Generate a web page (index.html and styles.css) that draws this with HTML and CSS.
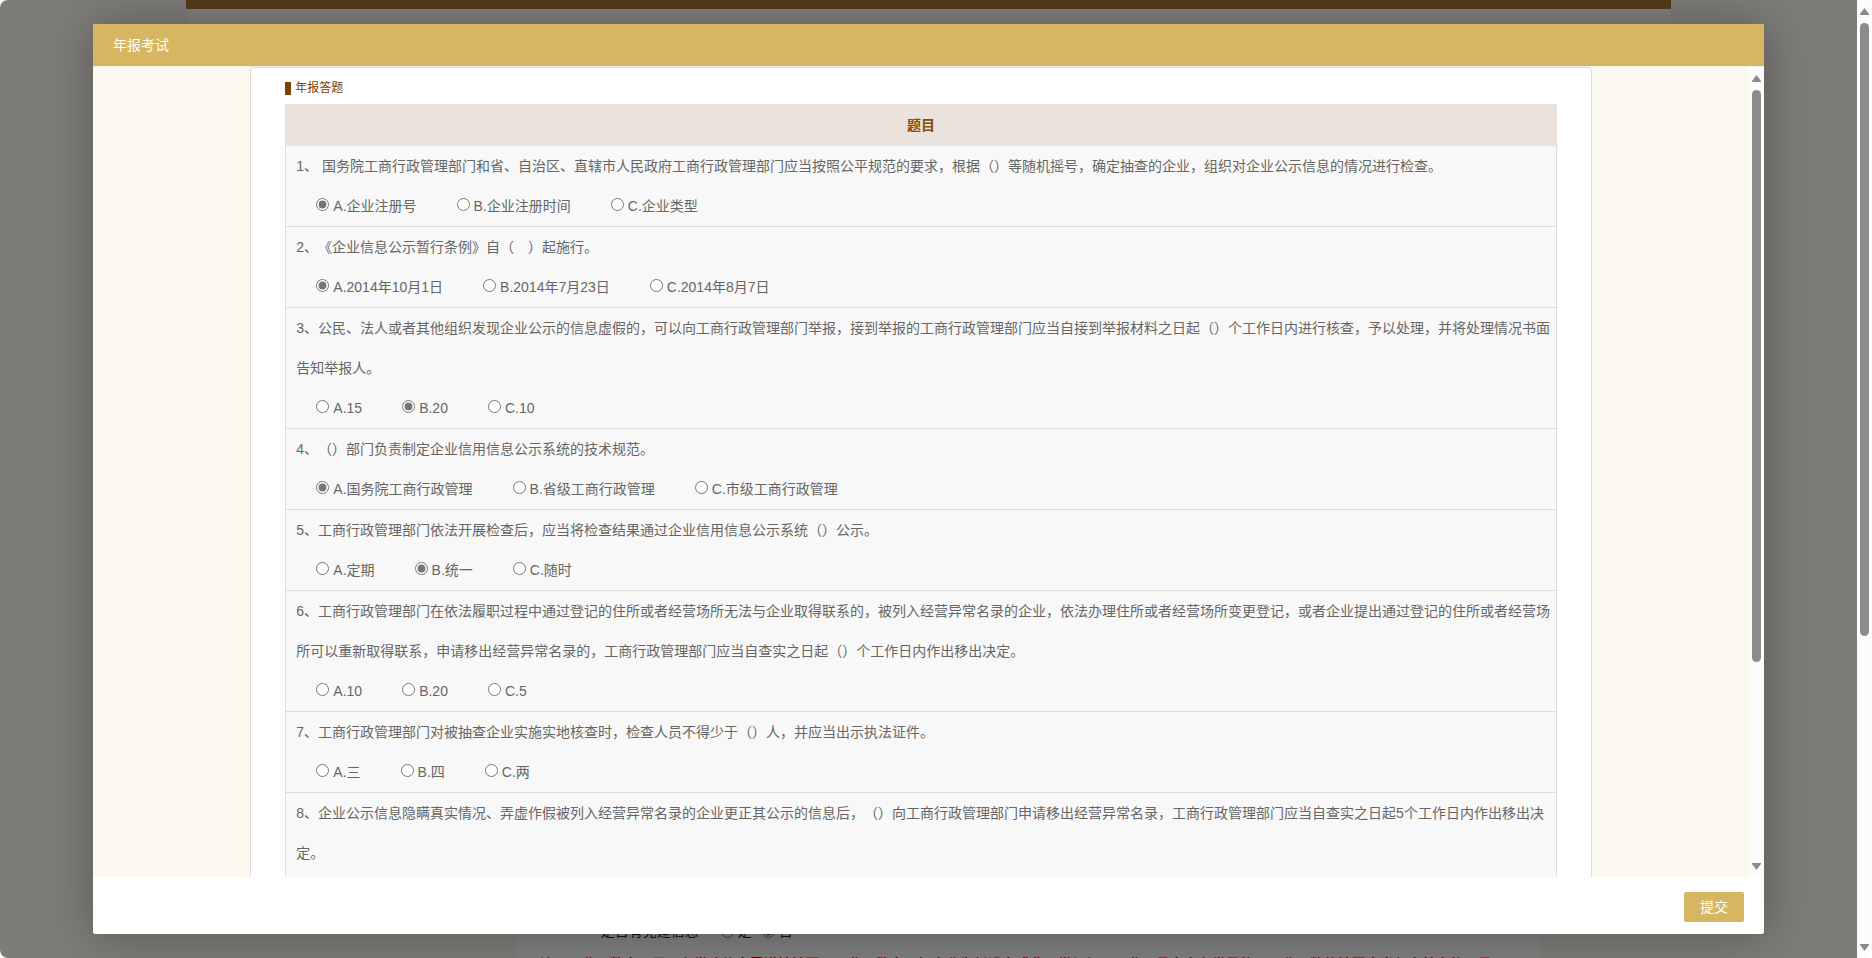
FILE: index.html
```html
<!DOCTYPE html>
<html lang="zh-CN">
<head>
<meta charset="utf-8">
<title>年报考试</title>
<link rel="stylesheet" href="styles.css">
</head>
<body>
<div class="window">
  <div class="page">
    <div class="page-banner"></div>
    <div class="page-head"></div>
    <div class="page-main">
      <div class="party">
        <span>是否有党建信息</span>
        <label><input type="radio" name="party"> 是</label>
        <label><input type="radio" name="party" checked> 否</label>
      </div>
      <p class="note">注：从业人数中，是否有党建信息需谨慎填写，从业人数中，如企业为新设立或非公党组织，从业人员中含有党员的，从业人数的填写应当包含其中的人员。</p>
    </div>
  </div>
  <div class="scrollbar outer"><i class="up"></i><i class="thumb"></i><i class="down"></i></div>
  <div class="shade"></div>
  <section class="dialog" role="dialog" aria-labelledby="dialog-title">
    <h1 class="dialog-title" id="dialog-title">年报考试</h1>
    <div class="dialog-body">
      <div class="scroll-area">
        <form class="card" id="exam">
          <h2 class="card-title">年报答题</h2>
          <table class="exam">
            <thead><tr><th>题目</th></tr></thead>
            <tbody>
              <tr><td>
                <p class="question">1、 国务院工商行政管理部门和省、自治区、直辖市人民政府工商行政管理部门应当按照公平规范的要求，根据（）等随机摇号，确定抽查的企业，组织对企业公示信息的情况进行检查。</p>
                <div class="answers">
                  <label><input type="radio" name="q1" checked>A.企业注册号</label>
                  <label><input type="radio" name="q1">B.企业注册时间</label>
                  <label><input type="radio" name="q1">C.企业类型</label>
                </div>
              </td></tr>
              <tr><td>
                <p class="question">2、《企业信息公示暂行条例》自（　）起施行。</p>
                <div class="answers">
                  <label><input type="radio" name="q2" checked>A.2014年10月1日</label>
                  <label><input type="radio" name="q2">B.2014年7月23日</label>
                  <label><input type="radio" name="q2">C.2014年8月7日</label>
                </div>
              </td></tr>
              <tr><td>
                <p class="question">3、公民、法人或者其他组织发现企业公示的信息虚假的，可以向工商行政管理部门举报，接到举报的工商行政管理部门应当自接到举报材料之日起（）个工作日内进行核查，予以处理，并将处理情况书面告知举报人。</p>
                <div class="answers">
                  <label><input type="radio" name="q3">A.15</label>
                  <label><input type="radio" name="q3" checked>B.20</label>
                  <label><input type="radio" name="q3">C.10</label>
                </div>
              </td></tr>
              <tr><td>
                <p class="question">4、（）部门负责制定企业信用信息公示系统的技术规范。</p>
                <div class="answers">
                  <label><input type="radio" name="q4" checked>A.国务院工商行政管理</label>
                  <label><input type="radio" name="q4">B.省级工商行政管理</label>
                  <label><input type="radio" name="q4">C.市级工商行政管理</label>
                </div>
              </td></tr>
              <tr><td>
                <p class="question">5、工商行政管理部门依法开展检查后，应当将检查结果通过企业信用信息公示系统（）公示。</p>
                <div class="answers">
                  <label><input type="radio" name="q5">A.定期</label>
                  <label><input type="radio" name="q5" checked>B.统一</label>
                  <label><input type="radio" name="q5">C.随时</label>
                </div>
              </td></tr>
              <tr><td>
                <p class="question">6、工商行政管理部门在依法履职过程中通过登记的住所或者经营场所无法与企业取得联系的，被列入经营异常名录的企业，依法办理住所或者经营场所变更登记，或者企业提出通过登记的住所或者经营场所可以重新取得联系，申请移出经营异常名录的，工商行政管理部门应当自查实之日起（）个工作日内作出移出决定。</p>
                <div class="answers">
                  <label><input type="radio" name="q6">A.10</label>
                  <label><input type="radio" name="q6">B.20</label>
                  <label><input type="radio" name="q6">C.5</label>
                </div>
              </td></tr>
              <tr><td>
                <p class="question">7、工商行政管理部门对被抽查企业实施实地核查时，检查人员不得少于（）人，并应当出示执法证件。</p>
                <div class="answers">
                  <label><input type="radio" name="q7">A.三</label>
                  <label><input type="radio" name="q7">B.四</label>
                  <label><input type="radio" name="q7">C.两</label>
                </div>
              </td></tr>
              <tr><td>
                <p class="question">8、企业公示信息隐瞒真实情况、弄虚作假被列入经营异常名录的企业更正其公示的信息后，（）向工商行政管理部门申请移出经营异常名录，工商行政管理部门应当自查实之日起5个工作日内作出移出决定。</p>
                <div class="answers"></div>
              </td></tr>
            </tbody>
          </table>
        </form>
      </div>
      <div class="scrollbar inner"><i class="up"></i><i class="thumb"></i><i class="down"></i></div>
    </div>
    <footer class="dialog-foot">
      <button type="submit" form="exam" class="submit">提交</button>
    </footer>
  </section>
</div>
</body>
</html>
```

FILE: styles.css
```css
* { box-sizing: border-box; }

body {
  margin: 0;
  background: #fff;
  color: #666;
  font: 14px/40px "Liberation Sans", Arial, "Noto Sans CJK SC", sans-serif;
  text-spacing-trim: space-all;
}

h1, h2, p { margin: 0; }

input[type="radio"] {
  width: 13px;
  height: 13px;
  accent-color: #767676;
}

/* Browser window with the page behind the dialog */
.window {
  position: relative;
  display: flex;
  height: 100vh;
  overflow: hidden;
  border-radius: 8px;
  background: #fcf9f0;
}

.page {
  flex: 1;
  display: flex;
  flex-direction: column;
  align-items: center;
  overflow: hidden;
}

.page-banner {
  flex: none;
  width: 80%;
  height: 9px;
  background: #a8782e;
}

.page-head {
  flex: 1;
  width: 80%;
  background: #fff;
}

.page-main {
  flex: none;
  width: 55%;
  height: 40px;
  margin-left: 200px;
  overflow: hidden;
  padding-left: 22px;
  background: #fff;
  color: #222;
}

.party {
  display: flex;
  gap: 10px;
  padding-left: 61px;
  line-height: 26px;
}

.party label { display: flex; align-items: center; gap: 4px; }

.party input { margin: 0; }

.party label:first-of-type { margin-left: 12px; }

.note {
  padding-top: 8px;
  color: #e00000;
  font-weight: bold;
  line-height: 24px;
  white-space: nowrap;
}

.shade {
  position: absolute;
  inset: 0 15px 0 0;
  background: rgba(0, 0, 0, .5);
}

/* Scrollbars */
.scrollbar {
  flex: none;
  display: flex;
  flex-direction: column;
  align-items: center;
  width: 15px;
  padding: 8px 0 7px;
  background: #fcfcfc;
}

.up, .down {
  width: 9px;
  height: 7px;
  background: #8b8b8b;
}

.up { clip-path: polygon(50% 0, 100% 85%, 100% 100%, 0 100%, 0 85%); }

.down {
  margin-top: auto;
  clip-path: polygon(0 0, 100% 0, 100% 15%, 50% 100%, 0 15%);
}

.thumb {
  width: 9px;
  margin-top: 8px;
  border-radius: 5px;
  background: #8b8b8b;
}

.outer .thumb { height: 65%; }
.inner .thumb { height: 72%; }

/* Dialog */
.dialog {
  position: absolute;
  inset: 24px 108px 24px 93px;
  display: flex;
  flex-direction: column;
  overflow: hidden;
  border-radius: 2px;
  background: #fff;
  box-shadow: 1px 1px 50px rgba(0, 0, 0, .3);
}

.dialog-title {
  flex: none;
  height: 43px;
  padding: 0 20px;
  border-bottom: 1px solid #eee;
  background: #d6b660;
  color: #fff;
  font-size: 14px;
  font-weight: normal;
  line-height: 42px;
}

.dialog-body {
  flex: 1;
  display: flex;
  min-height: 0;
}

.scroll-area {
  flex: 1;
  overflow: hidden;
  background: #fbf8f0;
}

.card {
  width: 81%;
  margin: 0 auto;
  padding: 4px 34px 34px;
  border: 1px solid #dfdbd0;
  border-radius: 4px;
  background: #fff;
}

.card-title {
  display: flex;
  align-items: center;
  gap: 4px;
  color: #804000;
  font-size: 12px;
  font-weight: normal;
  line-height: 32px;
}

.card-title::before {
  content: "";
  width: 6px;
  height: 13px;
  background: #804000;
}

.exam {
  width: 100%;
  border-spacing: 0;
  background: #f8f8f8;
}

.exam th {
  height: 42px;
  padding: 0;
  background: #eae2dc;
  color: #8a4b08;
}

.exam td {
  padding: 0 5px 0 10px;
  border: solid #ddd;
  border-width: 0 1px 1px;
}

.answers {
  display: flex;
  gap: 40px;
  min-height: 40px;
  padding-left: 20px;
}

.answers label {
  display: flex;
  align-items: center;
}

.answers input { margin: 0 4px 4px 0; }

.dialog-foot {
  flex: none;
  display: flex;
  justify-content: flex-end;
  padding: 15px 20px 12px;
}

.submit {
  width: 60px;
  height: 30px;
  padding: 0;
  border: 0;
  border-radius: 2px;
  background: #d6b660;
  color: #fff;
  font: inherit;
  line-height: 30px;
}
```
